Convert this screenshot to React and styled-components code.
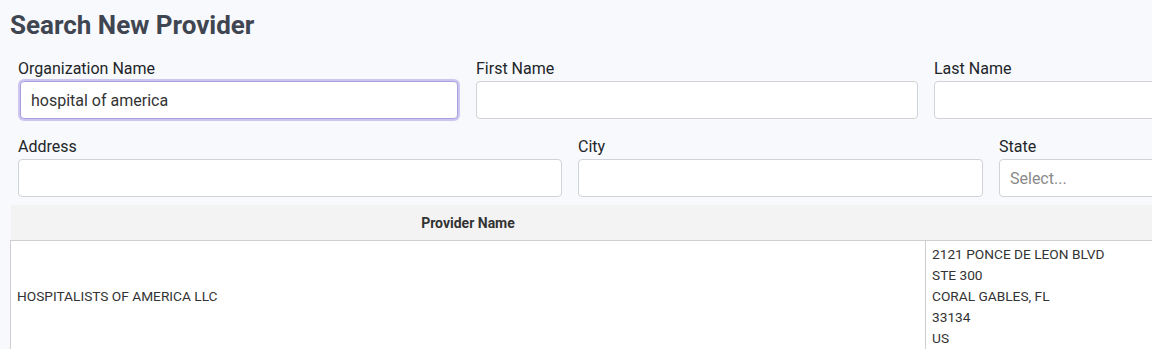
import React from 'react';
import styled, {createGlobalStyle} from 'styled-components';

const GlobalStyle = createGlobalStyle`
  body {
    margin: 0;
    background: #f8f9fc;
    font-family: Roboto, "Liberation Sans", sans-serif;
    overflow: hidden;
  }
`
const Page = styled.div`
  width: 1400px;
  padding: 10px 0 0 10px;
`
const Title = styled.h1`
  margin: 0;
  font-size: 26px;
  line-height: 30px;
  font-weight: 700;
  color: #3f4652;
`
const Form = styled.div`
  width: 1358px;
  margin: 19px 0 0 8px;
  display: flex;
  flex-direction: column;
  gap: 18px;
`
const Row = styled.div`
  display: grid;
  grid-template-columns: ${props => props.cols};
  gap: 16px;
`
const Field = styled.div`
  display: flex;
  flex-direction: column;
`
const Label = styled.label`
  font-size: 16px;
  line-height: 20px;
  color: #212529;
  margin-bottom: 2px;
`
const Input = styled.input`
  box-sizing: border-box;
  height: 38px;
  padding: 0 10px;
  font-family: inherit;
  font-size: 16px;
  color: #333;
  background: #fff;
  border-radius: 4px;
  outline: none;
  border: 1px solid ${props => props.$focused ? '#a99fe2' : '#d0d3d8'};
  box-shadow: ${props => props.$focused ? '0 0 0 2px #cdc6ef' : 'none'};
  ${props => props.$focused && 'margin: 0 2px; width: calc(100% - 4px);'}
  &::placeholder {
    color: #8a8a8a;
  }
`
const Table = styled.table`
  width: 1390px;
  margin-top: 8px;
  border-collapse: collapse;
  font-size: 13.7px;
  color: #333;
`
const Th = styled.th`
  height: 35px;
  padding: 0;
  background: #f3f3f3;
  border-bottom: 1px solid #cfcfcf;
  font-weight: 700;
  font-size: 14px;
  color: #333;
  text-align: center;
  width: ${props => props.w};
`
const Td = styled.td`
  padding: 3px 6px 2px;
  line-height: 21px;
  vertical-align: middle;
  background: #fff;
  border-left: 1px solid #cfcfcf;
`

const App = () => (
  <Page>
    <GlobalStyle/>
    <Title>Search New Provider</Title>
    <Form>
      <Row cols="1fr 1fr 1fr">
        <Field>
          <Label>Organization Name</Label>
          <Input $focused defaultValue="hospital of america"/>
        </Field>
        <Field>
          <Label>First Name</Label>
          <Input/>
        </Field>
        <Field>
          <Label>Last Name</Label>
          <Input/>
        </Field>
      </Row>
      <Row cols="544px 405px 1fr">
        <Field>
          <Label>Address</Label>
          <Input/>
        </Field>
        <Field>
          <Label>City</Label>
          <Input/>
        </Field>
        <Field>
          <Label>State</Label>
          <Input placeholder="Select..."/>
        </Field>
      </Row>
    </Form>
    <Table>
      <thead>
        <tr>
          <Th w="915px">Provider Name</Th>
          <Th/>
        </tr>
      </thead>
      <tbody>
        <tr>
          <Td>HOSPITALISTS OF AMERICA LLC</Td>
          <Td>
            2121 PONCE DE LEON BLVD<br/>
            STE 300<br/>
            CORAL GABLES, FL<br/>
            33134<br/>
            US
          </Td>
        </tr>
      </tbody>
    </Table>
  </Page>
);

export default App;
